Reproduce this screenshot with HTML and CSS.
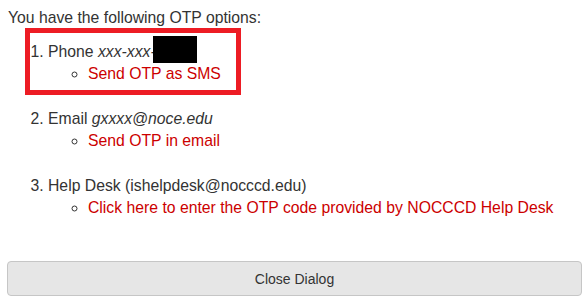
FILE: index.html
```html
<!DOCTYPE html>
<html>
<head>
<meta charset="utf-8">
<link rel="stylesheet" href="styles.css">
</head>
<body>
<div class="dialog">
  <p class="intro">You have the following OTP options:</p>
  <ol class="options">
    <li class="option">Phone <em>xxx-xxx-</em>
      <ul class="actions"><li><a href="#" class="link">Send OTP as SMS</a></li></ul>
    </li>
    <li class="option">Email <em>gxxxx@noce.edu</em>
      <ul class="actions"><li><a href="#" class="link">Send OTP in email</a></li></ul>
    </li>
    <li class="option">Help Desk (ishelpdesk@nocccd.edu)
      <ul class="actions"><li><a href="#" class="link">Click here to enter the OTP code provided by NOCCCD Help Desk</a></li></ul>
    </li>
  </ol>
  <button class="close-btn" type="button">Close Dialog</button>
  <div class="redact"></div>
  <div class="highlight"></div>
</div>
</body>
</html>
```

FILE: styles.css
```css
html, body {
  margin: 0;
  padding: 0;
  background: #fff;
}
body {
  font-family: "Liberation Sans", Arial, sans-serif;
  font-size: 15.75px;
  line-height: 22px;
  color: #333;
}
.dialog {
  position: relative;
  padding: 7px 5px 0 7px;
}
.intro {
  margin: 0 0 0 1px;
}
.options {
  margin: 12px 0 0 0;
  padding: 0 0 0 41px;
}
.option {
  margin-bottom: 23px;
}
.option em {
  font-style: italic;
}
.actions {
  list-style-type: circle;
  margin: 0;
  padding: 0 0 0 40px;
}
.link {
  color: #cc0000;
  text-decoration: none;
}
.close-btn {
  display: block;
  width: 575px;
  height: 35px;
  margin-top: 42px;
  background: #e6e6e6;
  border: 1px solid #c6c6c6;
  border-radius: 4px;
  font-family: "Liberation Sans", Arial, sans-serif;
  font-size: 14px;
  color: #333;
  padding: 0;
}
.redact {
  position: absolute;
  left: 153px;
  top: 36px;
  width: 44px;
  height: 27px;
  background: #000;
}
.highlight {
  position: absolute;
  left: 25px;
  top: 28px;
  width: 206px;
  height: 57px;
  border: 5px solid #ed1c24;
}
```
